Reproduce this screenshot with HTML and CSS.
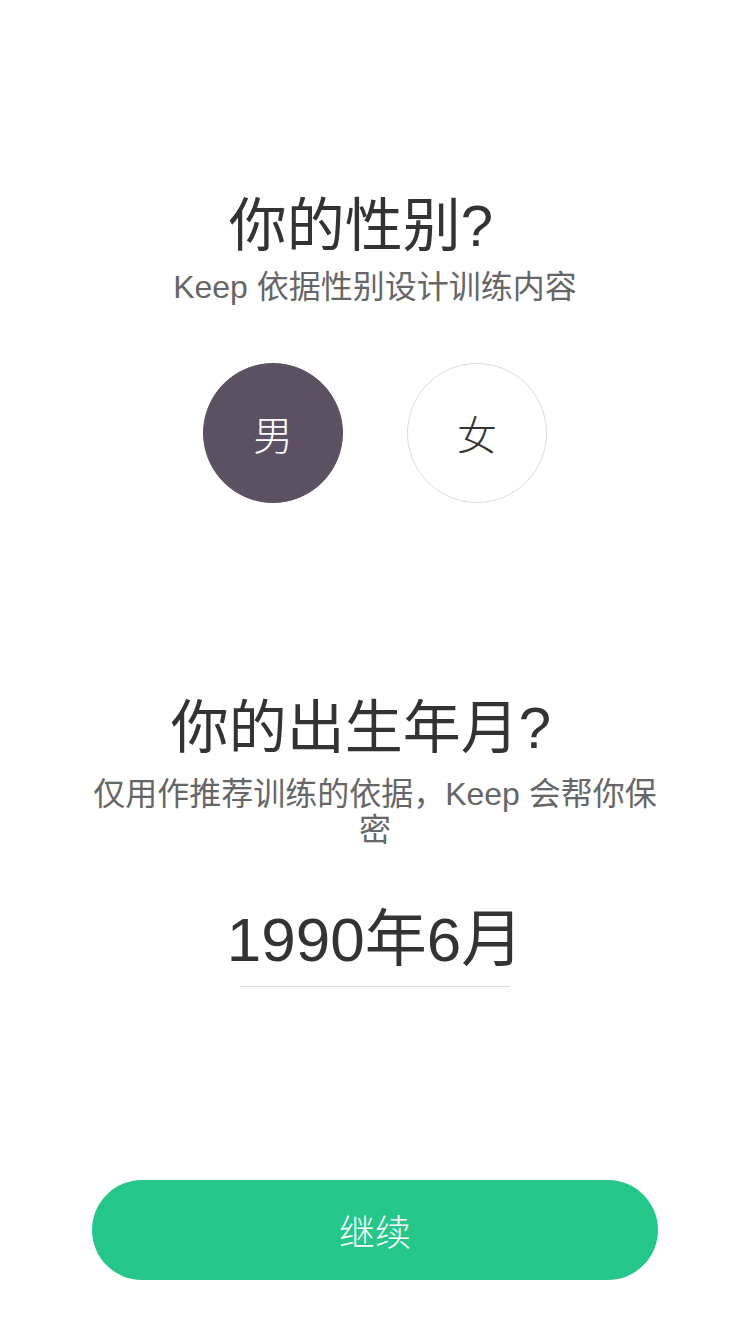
FILE: index.html
```html
<!DOCTYPE html>
<html lang="zh-CN">
<head>
<meta charset="utf-8">
<title>Keep</title>
<link rel="stylesheet" href="styles.css">
</head>
<body>
<main class="page">
  <section class="block gender">
    <h1 class="title">你的性别?</h1>
    <p class="sub">Keep 依据性别设计训练内容</p>
    <div class="choices">
      <div class="choice selected">男</div>
      <div class="choice">女</div>
    </div>
  </section>
  <section class="block birth">
    <h1 class="title title2">你的出生年月?</h1>
    <p class="sub sub2">仅用作推荐训练的依据，Keep 会帮你保密</p>
    <div class="date">1990年6月</div>
  </section>
  <button class="continue">继续</button>
</main>
</body>
</html>
```
FILE: styles.css
```css
* { box-sizing: border-box; }
html, body { margin: 0; padding: 0; background: #fff; }
body {
  font-family: "Liberation Sans", "Noto Sans CJK SC", sans-serif;
  color: #333;
}
.page {
  width: 750px;
  min-height: 1334px;
  display: flex;
  flex-direction: column;
  align-items: center;
  padding: 191px 0 54px;
}
.block {
  display: flex;
  flex-direction: column;
  align-items: center;
}
.title {
  margin: 0;
  padding-right: 28px;
  font-size: 58px;
  line-height: 70px;
  font-weight: 400;
  color: #333;
}
.sub {
  margin: 8px 0 0;
  font-size: 32px;
  line-height: 36px;
  color: #666;
  text-align: center;
}
.choices {
  display: flex;
  gap: 64px;
  margin-top: 58px;
}
.choice {
  width: 140px;
  height: 140px;
  border-radius: 50%;
  border: 1px solid #dcdcdc;
  display: flex;
  align-items: center;
  justify-content: center;
  font-size: 40px;
  font-weight: 300;
  color: #333;
}
.choice.selected {
  background: #5b5162;
  border-color: #5b5162;
  color: #fff;
}
.title2 { margin-top: 190px; }
.sub2 {
  margin-top: 13px;
  max-width: 580px;
}
.date {
  margin-top: 56px;
  width: 270px;
  font-size: 62px;
  line-height: 72px;
  padding-bottom: 10px;
  border-bottom: 1px solid #dcdcdc;
  color: #333;
  white-space: nowrap;
  display: flex;
  justify-content: center;
}
.continue {
  margin-top: auto;
  width: 566px;
  height: 100px;
  border: none;
  border-radius: 50px;
  background: #24c789;
  color: #fff;
  font-family: "Liberation Sans", "Noto Sans CJK SC", sans-serif;
  font-size: 36px;
  font-weight: 300;
  padding: 0;
}
```
